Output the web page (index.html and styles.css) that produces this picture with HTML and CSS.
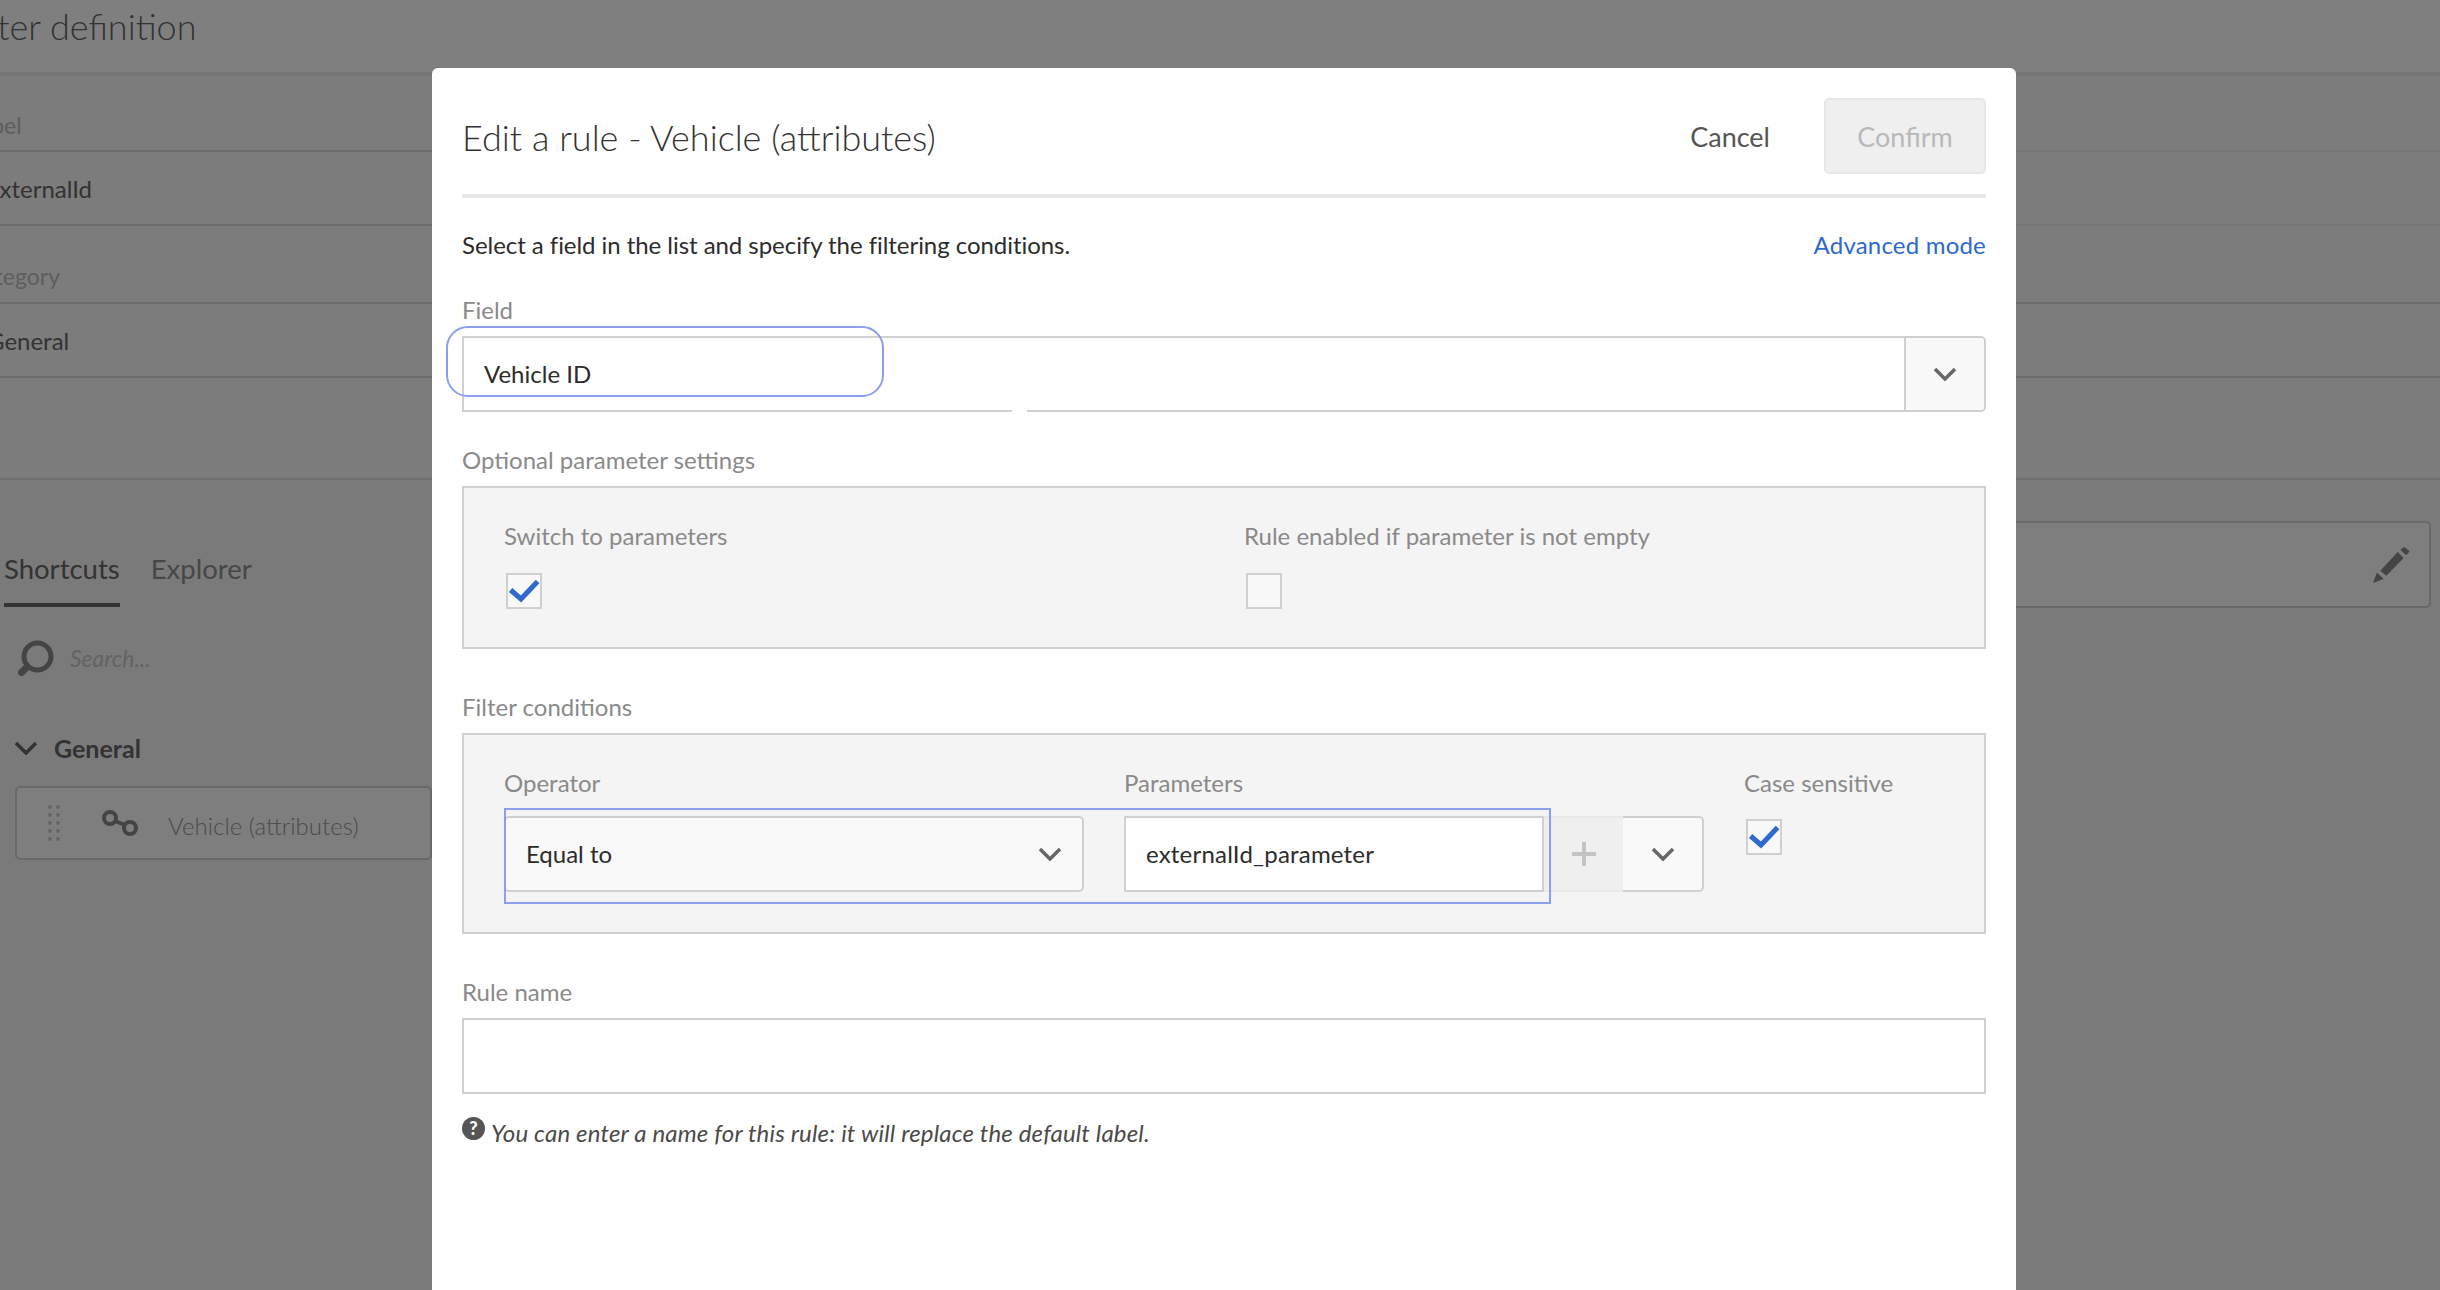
FILE: index.html
```html
<!DOCTYPE html>
<html lang="en">
<head>
<meta charset="utf-8">
<title>Edit a rule</title>
<link rel="stylesheet" href="styles.css">
</head>
<body>
<div class="page">
  <h1 class="page-title">Filter definition</h1>
  <div class="props">
    <div class="prop-row prop-soft prop-label first">Label</div>
    <div class="prop-row prop-soft prop-value">externalId</div>
    <div class="prop-row prop-label">Category</div>
    <div class="prop-row prop-value">General</div>
    <div class="prop-spacer"></div>
  </div>
  <div class="workspace">
    <aside class="palette">
      <div class="tabs"><span class="tab active">Shortcuts</span><span class="tab">Explorer</span></div>
      <div class="search">
        <svg class="search-icon" viewBox="0 0 36 36"><circle cx="19.5" cy="16.5" r="13.5" fill="none" stroke="#888" stroke-width="5"/><path d="M9 27 3.5 32.5" stroke="#888" stroke-width="7" stroke-linecap="round"/></svg>
        <span class="search-text">Search...</span>
      </div>
      <div class="group">
        <svg class="group-chev" viewBox="0 0 24 14"><path d="M2 2 12 12 22 2" fill="none" stroke="#666" stroke-width="3.5"/></svg>
        <span>General</span>
      </div>
      <div class="item">
        <svg class="grip" viewBox="0 0 12 36"><g fill="#ccc"><circle cx="2" cy="2" r="1.9"/><circle cx="10" cy="2" r="1.9"/><circle cx="2" cy="10" r="1.9"/><circle cx="10" cy="10" r="1.9"/><circle cx="2" cy="18" r="1.9"/><circle cx="10" cy="18" r="1.9"/><circle cx="2" cy="26" r="1.9"/><circle cx="10" cy="26" r="1.9"/><circle cx="2" cy="34" r="1.9"/><circle cx="10" cy="34" r="1.9"/></g></svg>
        <svg class="link-icon" viewBox="0 0 36 26"><g fill="none" stroke="#888" stroke-width="4"><circle cx="8" cy="8" r="6"/><circle cx="28" cy="18" r="6"/><path d="M13 11 23 15"/></g></svg>
        <span class="item-text">Vehicle (attributes)</span>
      </div>
    </aside>
    <div class="canvas">
      <div class="canvas-box">
        <svg class="pencil" viewBox="0 0 37 36"><path d="M0 36 4 25.5 10.7 32ZM7.3 23.7 24.7 5 30.7 11 13.3 28.7ZM27.3 2.7 31.3 0 36.7 4.3 33.3 8.3Z" fill="#888"/></svg>
      </div>
    </div>
  </div>
</div>
<div class="overlay"></div>
<section class="modal">
  <header class="modal-head">
    <h2 class="modal-title">Edit a rule - Vehicle (attributes)</h2>
    <div class="actions">
      <button class="btn-cancel">Cancel</button>
      <button class="btn-confirm">Confirm</button>
    </div>
  </header>
  <div class="intro">
    <span class="intro-text">Select a field in the list and specify the filtering conditions.</span>
    <a class="link">Advanced mode</a>
  </div>
  <div class="label field-label">Field</div>
  <div class="combo">
    <span class="combo-value">Vehicle ID</span>
    <span class="combo-btn"><svg class="chev" viewBox="0 0 24 14"><path d="M2 2 12 12 22 2"/></svg></span>
    <span class="combo-gap"></span>
    <span class="note-round"></span>
  </div>
  <div class="label optional-label">Optional parameter settings</div>
  <div class="panel panel-optional">
    <div class="col-switch">
      <div class="label">Switch to parameters</div>
      <span class="check"><svg viewBox="0 0 32 32"><path d="M2.6 15 13 24 29.6 6.6" fill="none" stroke="#2d69cf" stroke-width="5"/></svg></span>
    </div>
    <div class="col-enabled">
      <div class="label">Rule enabled if parameter is not empty</div>
      <span class="check"></span>
    </div>
  </div>
  <div class="label filter-label">Filter conditions</div>
  <div class="panel panel-filter">
    <div class="col-operator">
      <div class="label">Operator</div>
      <div class="select"><span>Equal to</span><svg class="chev" viewBox="0 0 24 14"><path d="M2 2 12 12 22 2"/></svg></div>
    </div>
    <div class="col-params">
      <div class="label">Parameters</div>
      <div class="param-row">
        <div class="param-input">externalId_parameter</div>
        <span class="param-add"><svg viewBox="0 0 24 24"><path d="M12 0V24M0 12H24" stroke="#c4c4c4" stroke-width="4"/></svg></span>
        <span class="param-menu"><svg class="chev" viewBox="0 0 24 14"><path d="M2 2 12 12 22 2"/></svg></span>
      </div>
    </div>
    <div class="col-case">
      <div class="label">Case sensitive</div>
      <span class="check check-case"><svg viewBox="0 0 32 32"><path d="M2.6 15 13 24 29.6 6.6" fill="none" stroke="#2d69cf" stroke-width="5"/></svg></span>
    </div>
    <span class="note-rect"></span>
  </div>
  <div class="label rule-label">Rule name</div>
  <div class="rule-input"></div>
  <div class="help">
    <span class="help-icon">?</span>
    <em class="help-text">You can enter a name for this rule: it will replace the default label.</em>
  </div>
</section>
</body>
</html>
```
FILE: styles.css
```css
* { box-sizing: border-box; }
html, body { margin: 0; height: 100%; }
body {
  width: 2440px;
  height: 1290px;
  overflow: hidden;
  position: relative;
  background: #fff;
  font-family: "Lato", "Open Sans", sans-serif;
  font-size: 24px;
  line-height: 30px;
  color: #2c2c2c;
}
.page { height: 1290px; background: #f5f5f5; }
.page-title {
  height: 72px;
  margin: 0 0 0 -39px;
  padding-top: 4px;
  font-size: 36px;
  font-weight: 300;
  line-height: 44px;
  color: #666;
  background: #fff;
}
.props { background: #f8f8f8; border-top: 4px solid #ececec; }
.prop-row { border-bottom: 2px solid #d6d6d6; }
.prop-soft { border-image: linear-gradient(90deg, #d6d6d6 50%, #ececec 50%) 1; }
.prop-label { height: 78px; padding-top: 35px; margin-left: -32px; font-size: 23px; color: #bcbcbc; }
.prop-label.first { height: 76px; padding-top: 34px; }
.prop-value { height: 74px; padding-top: 22px; margin-left: -13px; color: #666; }
.prop-spacer { height: 102px; border-bottom: 2px solid #e0e0e0; }
.workspace { display: flex; }
.palette { width: 432px; padding-left: 4px; }
.tabs { display: flex; gap: 31px; height: 127px; padding-top: 72px; }
.tab { color: #8e8e8e; font-size: 27.5px; line-height: 34px; height: 55px; }
.tab.active { color: #666; border-bottom: 4px solid #666; }
.search { display: flex; align-items: center; gap: 16px; margin: 33px 0 0 14px; }
.search-icon { width: 36px; height: 36px; }
.search-text { font-size: 23px; font-style: italic; color: #c6c6c6; }
.group { display: flex; align-items: center; gap: 16px; height: 30px; margin: 57px 0 0 10px; font-size: 25px; font-weight: 700; color: #666; }
.group-chev { width: 24px; height: 14px; }
.item { display: flex; align-items: center; height: 74px; margin: 23px 0 0 11px; background: #fcfcfc; border: 2px solid #d0d0d0; border-radius: 5px; padding-left: 31px; }
.grip { width: 12px; height: 36px; margin-right: 42px; }
.link-icon { width: 36px; height: 26px; margin-right: 30px; }
.item-text { margin-top: 6px; font-weight: 300; color: #969696; }
.canvas { flex: 1; }
.canvas-box { height: 87px; margin: 41px 9px 0 0; background: #fcfcfc; border: 2px solid #d0d0d0; border-radius: 5px; display: flex; justify-content: flex-end; align-items: center; padding-right: 19px; }
.pencil { width: 37px; height: 36px; }
.overlay { position: absolute; inset: 0; background: rgba(0,0,0,.5); }
.modal {
  position: absolute;
  left: 432px;
  top: 68px;
  bottom: 0;
  width: 1584px;
  background: #fff;
  border-radius: 6px 6px 0 0;
  padding: 0 30px;
}
.modal-head {
  display: flex;
  justify-content: space-between;
  align-items: center;
  height: 130px;
  padding-top: 30px;
  padding-bottom: 20px;
  border-bottom: 4px solid #e8e8e8;
}
.modal-title { margin: 2px 0 0; font-size: 36px; font-weight: 300; color: #333; }
.actions { display: flex; align-items: center; gap: 54px; }
.btn-cancel { border: 0; background: none; font: inherit; font-size: 27px; color: #555; padding: 2px 0 0; }
.btn-confirm { width: 162px; height: 76px; border: 2px solid #e6e6e6; border-radius: 5px; background: #efefef; font: inherit; font-size: 27px; color: #b8b8b8; padding: 2px 0 0; }
.intro { display: flex; justify-content: space-between; align-items: center; height: 30px; margin-top: 32px; }
.intro-text { letter-spacing: -.05px; }
.link { color: #2d69cf; letter-spacing: .2px; }
.label { color: #8a8a8a; }
.field-label { margin-top: 35px; }
.combo { position: relative; display: flex; height: 76px; margin-top: 11px; border: 2px solid #d0d0d0; border-radius: 0 5px 5px 0; }
.combo-value { flex: 1; display: flex; align-items: center; padding-left: 20px; }
.combo-btn { width: 80px; border-left: 2px solid #d0d0d0; background: #f8f8f8; display: flex; align-items: center; justify-content: center; border-radius: 0 4px 4px 0; }
.chev { width: 24px; height: 14px; }
.chev path { fill: none; stroke: #666; stroke-width: 3.5; }
.combo-gap { position: absolute; left: 548px; bottom: -2px; width: 15px; height: 2px; background: #fff; }
.note-round { position: absolute; left: -18px; top: -12px; width: 438px; height: 71px; border: 2px solid #8c9eee; border-radius: 22px; }
.optional-label { margin-top: 33px; }
.panel { display: flex; position: relative; background: #f4f4f4; border: 2px solid #d0d0d0; }
.panel-optional { height: 163px; margin-top: 11px; padding: 33px 40px; }
.col-switch { width: 740px; }
.check { display: block; width: 36px; height: 36px; margin: 22px 0 0 2px; border: 2px solid #d0d0d0; background: #f8f8f8; }
.check svg { display: block; width: 100%; height: 100%; }
.filter-label { margin-top: 43px; }
.panel-filter { height: 201px; margin-top: 11px; padding: 33px 40px; }
.col-operator { width: 620px; }
.select { display: flex; justify-content: space-between; align-items: center; width: 580px; height: 76px; margin-top: 18px; padding: 0 20px; background: #f9f9f9; border: 2px solid #d0d0d0; border-radius: 5px; }
.col-params { width: 620px; }
.param-row { display: flex; height: 76px; margin-top: 18px; }
.param-input { width: 420px; background: #fff; border: 2px solid #d0d0d0; display: flex; align-items: center; padding-left: 20px; letter-spacing: .2px; }
.param-add { width: 79px; background: #efefef; border: 2px solid #e8e8e8; border-left: 0; border-right: 0; display: flex; align-items: center; justify-content: center; }
.param-add svg { width: 24px; height: 24px; }
.param-menu { width: 81px; background: #f9f9f9; border: 2px solid #d0d0d0; border-left: 0; border-radius: 0 5px 5px 0; display: flex; align-items: center; justify-content: center; }
.check-case { margin-top: 21px; }
.note-rect { position: absolute; left: 40px; top: 73px; width: 1047px; height: 96px; border: 2px solid #8c9eee; }
.rule-label { margin-top: 43px; }
.rule-input { height: 76px; margin-top: 11px; border: 2px solid #d0d0d0; }
.help { display: flex; align-items: flex-start; gap: 6px; margin-top: 23px; color: #4a4a4a; }
.help-icon { width: 23px; height: 23px; border-radius: 50%; background: #555; color: #fff; font-size: 18px; line-height: 23px; font-weight: 900; text-align: center; }
.help-text { margin-top: 1px; letter-spacing: .17px; }
```
